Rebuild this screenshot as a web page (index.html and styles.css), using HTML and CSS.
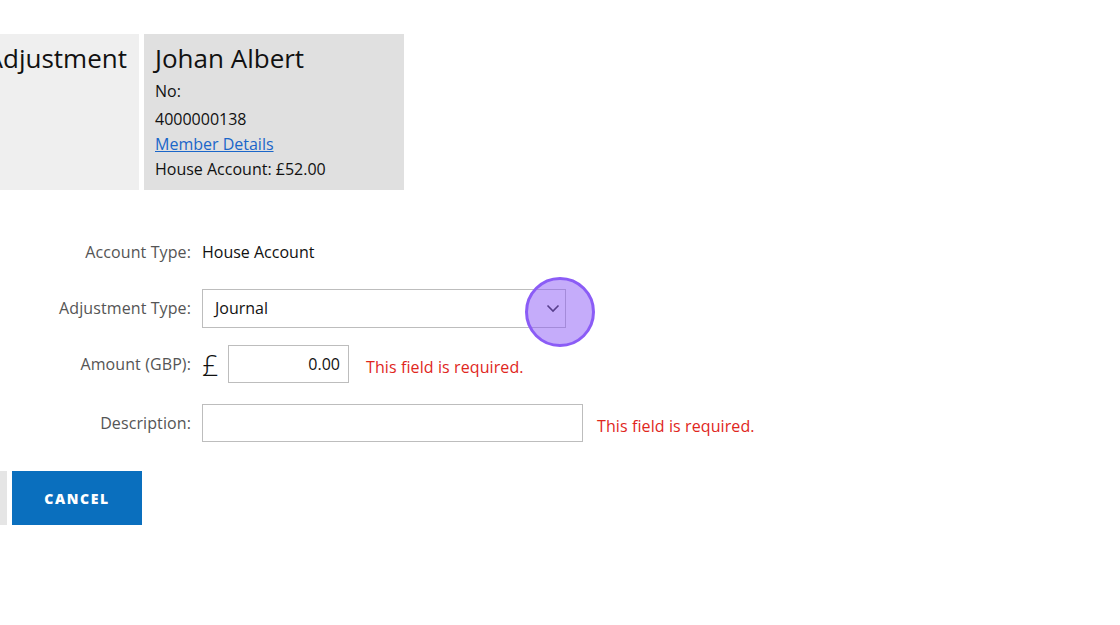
FILE: index.html
```html
<!DOCTYPE html>
<html>
<head>
<meta charset="utf-8">
<link rel="stylesheet" href="styles.css">
</head>
<body>
<div class="page">
  <div class="header">
    <div class="title-panel"><h1>Adjustment</h1></div>
    <div class="member-panel">
      <h2>Johan Albert</h2>
      <div class="line">No:</div>
      <div class="line">4000000138</div>
      <div class="line"><a href="#">Member Details</a></div>
      <div class="line">House Account: £52.00</div>
    </div>
  </div>

  <div class="form">
    <div class="row row-account">
      <div class="label">Account Type:</div>
      <div class="value">House Account</div>
    </div>
    <div class="row row-select">
      <div class="label">Adjustment Type:</div>
      <div class="value">
        <div class="select">
          <span>Journal</span>
          <svg class="chev" width="14" height="9" viewBox="0 0 14 9"><path d="M1.5 1.5 L7 7 L12.5 1.5" fill="none" stroke="#222" stroke-width="1.6"/></svg>
          <div class="cursor"></div>
        </div>
      </div>
    </div>
    <div class="row row-amount">
      <div class="label">Amount (GBP):</div>
      <div class="value">
        <span class="pound">£</span>
        <div class="input amount">0.00</div>
        <span class="error">This field is required.</span>
      </div>
    </div>
    <div class="row row-desc">
      <div class="label">Description:</div>
      <div class="value">
        <div class="input desc"></div>
        <span class="error desc-error">This field is required.</span>
      </div>
    </div>
  </div>

  <div class="buttons">
    <button class="btn btn-save">SAVE</button>
    <button class="btn btn-cancel">CANCEL</button>
  </div>
</div>
</body>
</html>
```

FILE: styles.css
```css
html, body {
  margin: 0;
  padding: 0;
  background: #ffffff;
  overflow: hidden;
}
body {
  font-family: "Open Sans", "Noto Sans", sans-serif;
  color: #111;
}
.page {
  width: 1120px;
  height: 625px;
  padding-top: 34px;
  box-sizing: border-box;
}
.header {
  display: flex;
  gap: 5px;
  height: 156px;
  margin-left: -160px;
}
.title-panel {
  width: 299px;
  background: #efefef;
  display: flex;
  justify-content: flex-end;
  padding-right: 12px;
  box-sizing: border-box;
}
.title-panel h1 {
  margin: 6px 0 0 0;
  font-size: 26px;
  font-weight: 400;
  line-height: 36px;
  white-space: nowrap;
}
.member-panel {
  width: 260px;
  background: #e0e0e0;
  padding: 6px 10px 0 11px;
  box-sizing: border-box;
}
.member-panel h2 {
  margin: 0;
  font-size: 26px;
  font-weight: 400;
  line-height: 36px;
}
.member-panel .line {
  font-size: 16px;
  line-height: 25px;
  height: 25px;
}
.member-panel .line:nth-of-type(1) { margin-top: 3px; }
.member-panel .line:nth-of-type(2) { margin-top: 3px; }
.member-panel a {
  color: #1a66c9;
  text-decoration: underline;
}
.form {
  margin-top: 42px;
  display: flex;
  flex-direction: column;
}
.row {
  display: flex;
  align-items: center;
  gap: 11px;
}
.label {
  width: 191px;
  text-align: right;
  font-size: 16px;
  color: #555;
  flex: none;
  letter-spacing: 0.1px;
}
.value {
  display: flex;
  align-items: center;
  font-size: 16px;
  color: #111;
}
.row-account { height: 40px; }
.row-select { height: 40px; margin-top: 16px; }
.row-amount { height: 40px; margin-top: 16px; }
.row-desc { height: 40px; margin-top: 19px; }
.select {
  position: relative;
  width: 364px;
  height: 39px;
  border: 1px solid #bdbdbd;
  box-sizing: border-box;
  display: flex;
  align-items: center;
  padding-left: 12px;
}
.chev {
  position: absolute;
  right: 5px;
  top: 14px;
}
.cursor {
  position: absolute;
  left: 322px;
  top: -13px;
  width: 64px;
  height: 64px;
  border-radius: 50%;
  border: 3px solid #8b5cf6;
  background: rgba(140, 90, 246, 0.5);
}
.pound {
  font-family: "Open Sans", sans-serif;
  font-weight: 300;
  font-size: 29px;
  width: 26px;
  line-height: 30px;
  margin-top: 2px;
}
.input {
  border: 1px solid #bdbdbd;
  box-sizing: border-box;
  background: #fff;
}
.amount {
  width: 121px;
  height: 38px;
  text-align: right;
  padding-right: 8px;
  line-height: 36px;
}
.desc {
  width: 381px;
  height: 38px;
}
.error {
  color: #e0261c;
  font-size: 16px;
  margin-left: 17px;
  margin-top: 5px;
  letter-spacing: 0.1px;
}
.desc-error {
  margin-left: 14px;
  margin-top: 5px;
}
.buttons {
  margin-top: 28px;
  display: flex;
  gap: 5px;
  margin-left: -123px;
}
.btn {
  height: 54px;
  border: none;
  font-family: "Open Sans", sans-serif;
  font-weight: 800;
  font-size: 14px;
  letter-spacing: 1.6px;
  padding: 0;
}
.btn-save {
  width: 130px;
  background: #e5e5e5;
  color: #333;
}
.btn-cancel {
  width: 130px;
  background: #0a6fbe;
  color: #fff;
}
```
